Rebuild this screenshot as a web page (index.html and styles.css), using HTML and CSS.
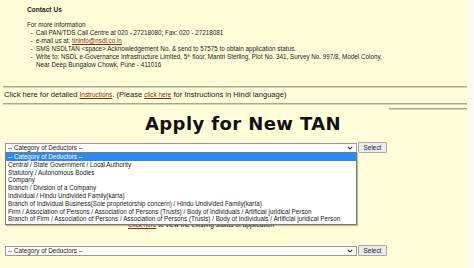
FILE: index.html
```html
<!DOCTYPE html>
<html>
<head>
<meta charset="utf-8">
<title>Apply for New TAN</title>
<link rel="stylesheet" href="styles.css">
</head>
<body>
<div class="page">
  <div class="contact">
    <div class="contact-title">Contact Us</div>
    <div class="contact-intro">For more information</div>
    <ul class="contact-list">
      <li>Call PAN/TDS Call Centre at 020 - 27218080; Fax: 020 - 27218081</li>
      <li>e-mail us at: <a class="mail" href="#">tininfo@nsdl.co.in</a></li>
      <li>SMS NSDLTAN &lt;space&gt; Acknowledgement No. &amp; send to 57575 to obtain application status.</li>
      <li>Write to: NSDL e-Governance Infrastructure Limited, 5<sup>th</sup> floor, Mantri Sterling, Plot No. 341, Survey No. 997/8, Model Colony,<br>Near Deep Bungalow Chowk, Pune - 411016</li>
    </ul>
  </div>

  <div class="rule"></div>
  <div class="instructions">Click here for detailed <a class="small-link" href="#">Instructions</a>. (Please <a class="small-link" href="#">click here</a> for Instructions in Hindi language)</div>
  <div class="rule rule-2"></div>
  <div class="rule rule-short"></div>

  <h1 class="title">Apply for New TAN</h1>

  <div class="select-row">
    <div class="fake-select">
      <span>-- Category of Deductors --</span>
      <svg class="arrow" width="6" height="4" viewBox="0 0 6 4"><path d="M0.8 0.8 L3 3 L5.2 0.8" fill="none" stroke="#333" stroke-width="1.1"/></svg>
    </div>
    <div class="btn">Select</div>
  </div>

  <ul class="dropdown">
    <li class="active">-- Category of Deductors --</li>
    <li>Central / State Government / Local Authority</li>
    <li>Statutory / Autonomous Bodies</li>
    <li>Company</li>
    <li>Branch / Division of a Company</li>
    <li>Individual / Hindu Undivided Family(karta)</li>
    <li>Branch of Individual Business(Sole proprietorship concern) / Hindu Undivided Family(karta)</li>
    <li>Firm / Association of Persons / Association of Persons (Trusts) / Body of Individuals / Artificial juridical Person</li>
    <li>Branch of Firm / Association of Persons / Association of Persons (Trusts) / Body of Individuals / Artificial juridical Person</li>
  </ul>

  <div class="hidden-line"><a class="small-link" href="#">Click here</a> to view the existing status of application</div>

  <div class="select-row select-row-2">
    <div class="fake-select">
      <span>-- Category of Deductors --</span>
      <svg class="arrow" width="6" height="4" viewBox="0 0 6 4"><path d="M0.8 0.8 L3 3 L5.2 0.8" fill="none" stroke="#333" stroke-width="1.1"/></svg>
    </div>
    <div class="btn">Select</div>
  </div>
</div>
</body>
</html>
```
FILE: styles.css
```css
* { box-sizing: border-box; }
body {
  margin: 0;
  background: #fbfbf1;
  font-family: "Liberation Sans", Arial, sans-serif;
  color: #111;
}
.page {
  position: relative;
  width: 467px;
  height: 268px;
  background: #fffed9;
  overflow: hidden;
}
.contact {
  padding: 6px 0 0 27px;
  font-size: 6.3px;
  line-height: 8px;
  color: #222;
}
.contact-title {
  font-weight: bold;
  font-size: 6.6px;
  line-height: 8px;
}
.contact-intro {
  margin-top: 7px;
}
.contact-list {
  margin: 0;
  padding: 0 0 0 9px;
  list-style-type: "-  ";
}
.contact-list sup {
  font-size: 4px;
  line-height: 0;
  vertical-align: 2px;
}
.mail {
  color: #8a2a12;
  text-decoration: underline;
}
.rule {
  margin: 17px 0 0 3px;
  width: 464px;
  height: 2px;
  background: #a9a98e;
  border-bottom: 1px solid #d4d4b6;
}
.rule-2 {
  margin-top: 3px;
}
.rule-short {
  margin: 3px 0 0 389px;
  width: 78px;
}
.instructions {
  margin: 2px 0 0 4px;
  font-size: 7.6px;
  line-height: 10px;
  color: #1a1a1a;
}
.small-link {
  font-size: 6.4px;
  color: #8a2a12;
  text-decoration: underline;
}
.title {
  margin: 4px 0 0 145px;
  font-family: "DejaVu Sans", Verdana, sans-serif;
  font-size: 18px;
  line-height: 19px;
  letter-spacing: 0.4px;
  font-weight: bold;
  color: #111;
}
.select-row {
  display: flex;
  align-items: center;
  margin: 9px 0 0 5px;
  height: 11px;
}
.fake-select {
  display: flex;
  align-items: center;
  justify-content: space-between;
  width: 352px;
  height: 10px;
  padding: 0 3px 0 2px;
  background: #fff;
  border: 1px solid #9a9a9a;
  font-size: 6.3px;
  color: #222;
}
.arrow { display: block; }
.btn {
  margin-left: 1px;
  width: 29px;
  height: 11px;
  display: flex;
  align-items: center;
  justify-content: center;
  background: #ececec;
  border: 1px solid #a8a8a8;
  border-radius: 1px;
  font-size: 6.4px;
  color: #222;
}
.dropdown {
  position: absolute;
  left: 5px;
  top: 152px;
  width: 352px;
  height: 73px;
  margin: 0;
  padding: 0;
  list-style: none;
  background: #fff;
  border: 1px solid #7a7a7a;
  box-shadow: 1px 1px 1px rgba(0, 0, 0, 0.25);
  font-size: 6.3px;
  line-height: 7.8px;
  color: #222;
  z-index: 2;
}
.dropdown li {
  padding-left: 2px;
  white-space: nowrap;
}
.dropdown li.active {
  background: #2a8af5;
  color: #fff;
}
.hidden-line {
  margin: 68px 0 0 128px;
  font-size: 6.6px;
  line-height: 8px;
  color: #222;
}
.select-row-2 {
  margin-top: 16px;
}
```
